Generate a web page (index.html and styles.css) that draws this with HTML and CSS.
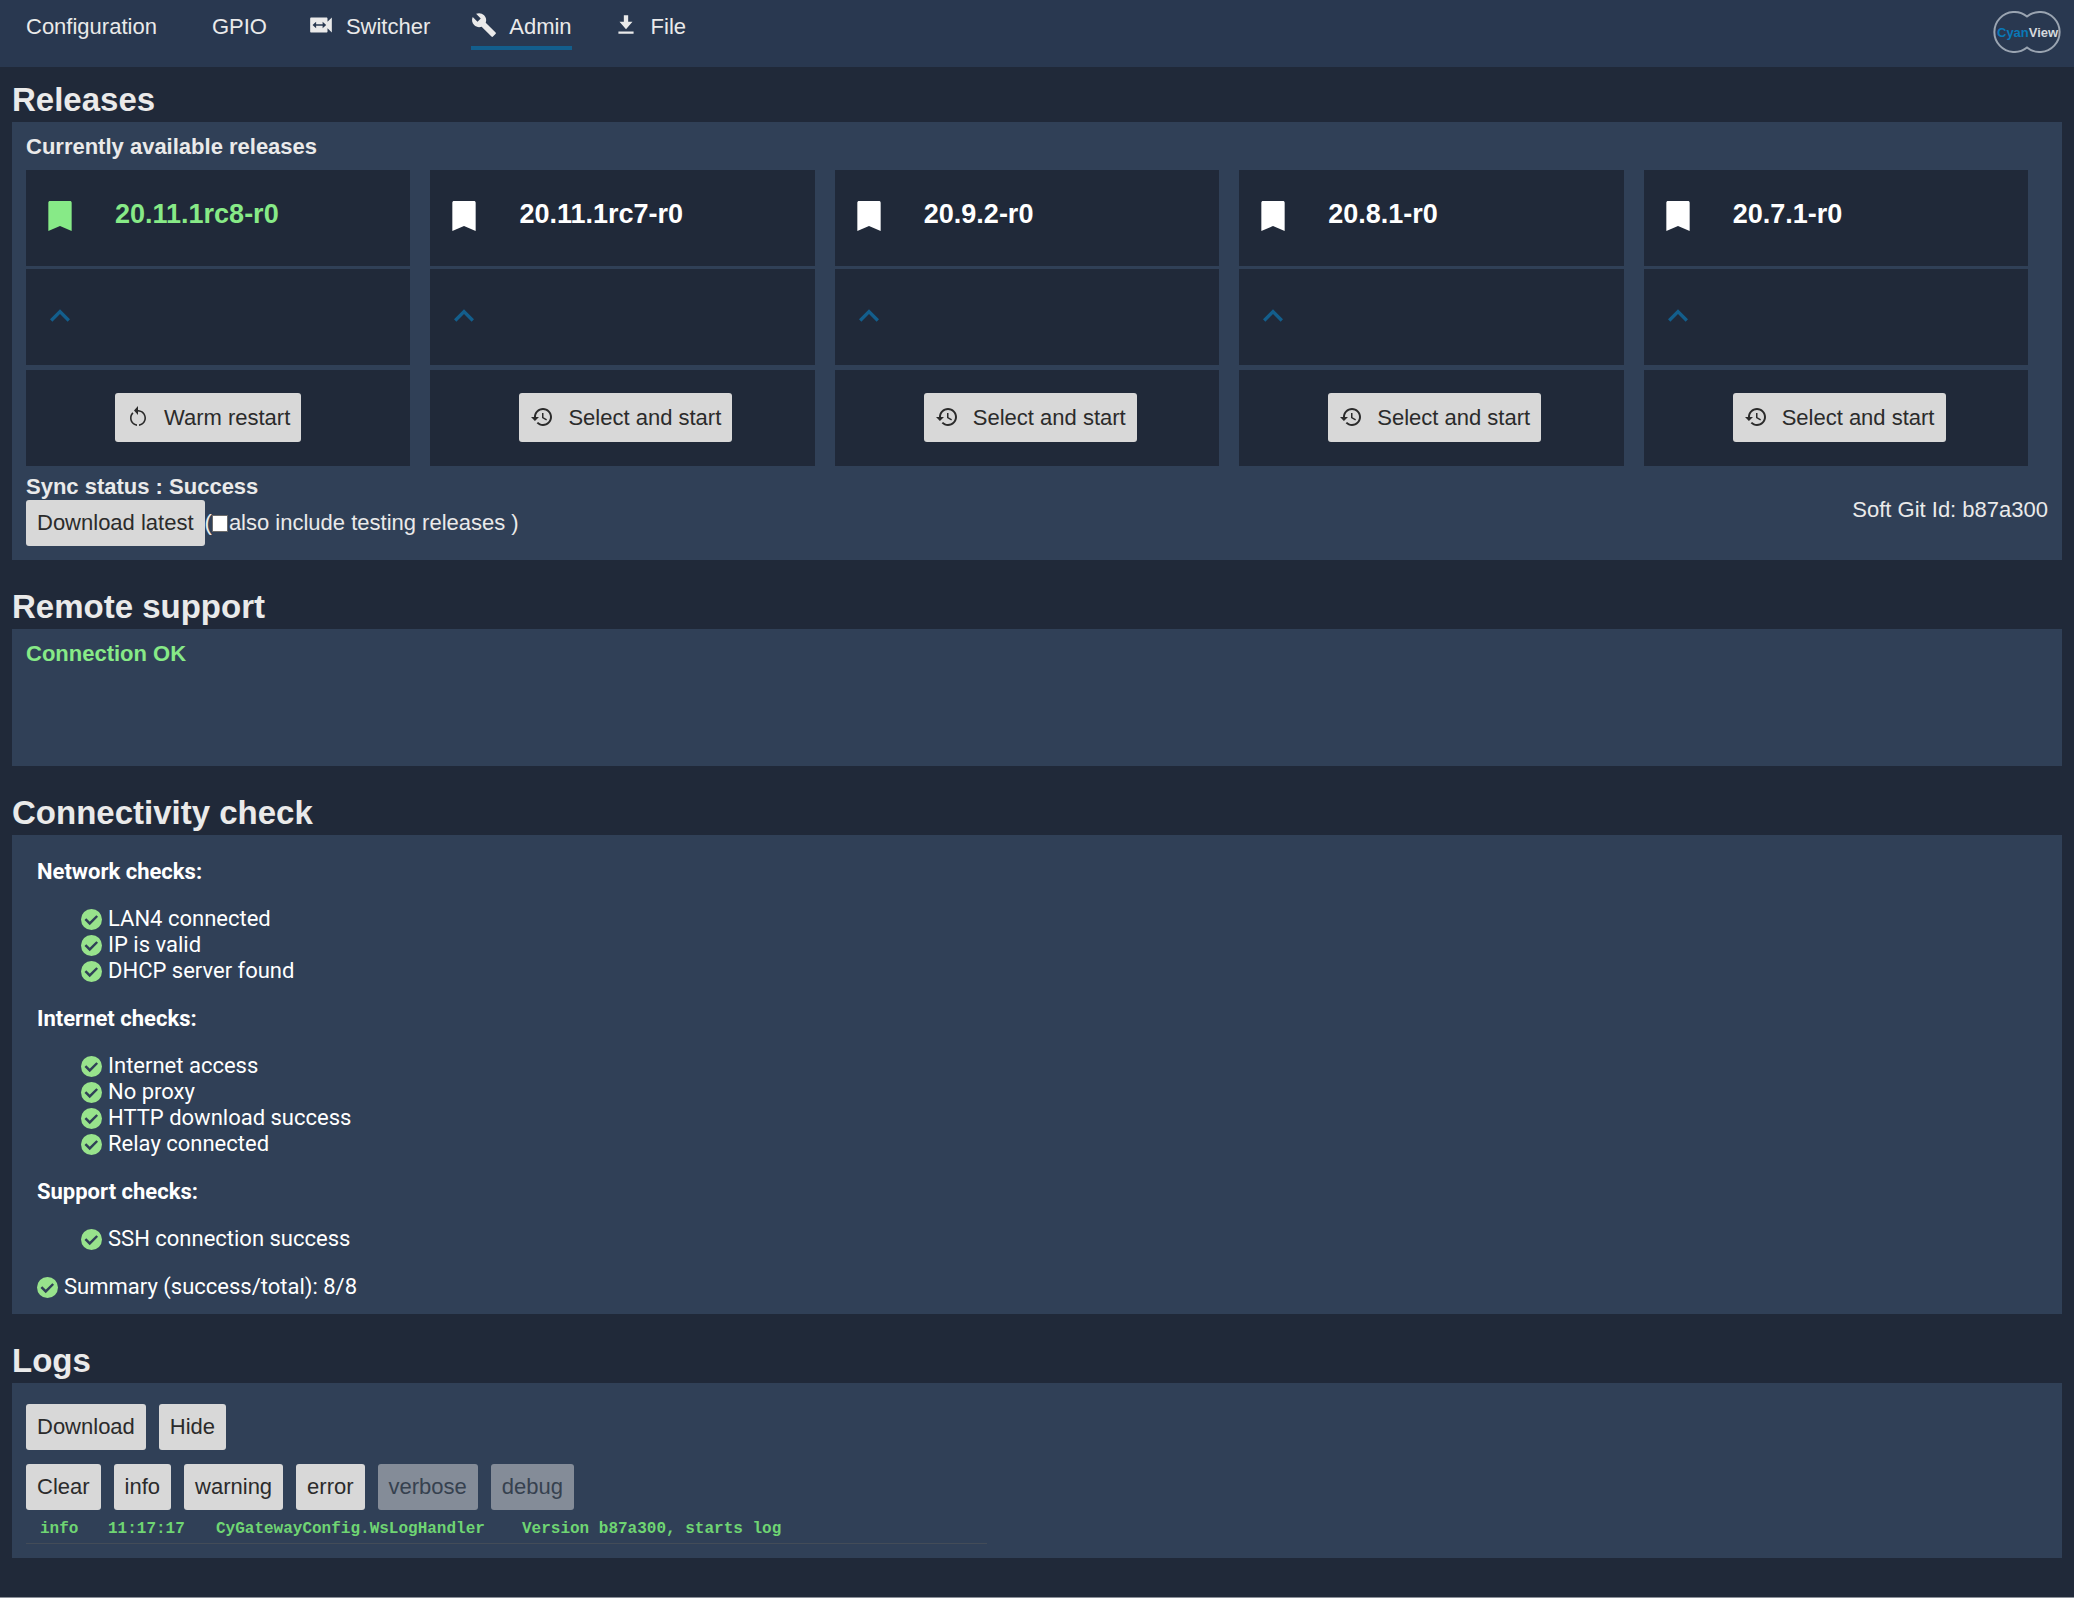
FILE: index.html
```html
<!DOCTYPE html>
<html lang="en">
<head>
<meta charset="UTF-8" />
<title>CyanView - Admin</title>
<meta name="viewport" content="width=device-width, initial-scale=1" />
<link rel="stylesheet" href="styles.css">
</head>
<body>

<!-- shared icons -->
<svg class="sprite" aria-hidden="true">
  <symbol id="i-bookmark" viewBox="0 0 24 24"><path d="M18 3H6c-.6 0-1 .4-1 1v17l7-3 7 3V4c0-.6-.4-1-1-1z"/></symbol>
  <symbol id="i-up" viewBox="0 0 24 24"><path d="M7.410 15.410L12 10.830l4.590 4.580L18 14l-6-6-6 6z"/></symbol>
  <symbol id="i-restart" viewBox="0 0 24 24"><path d="M12 5V1L8 5.500l4 4.500V6.600c3.500 0 6.400 2.900 6.400 6.400 0 3.200-2.300 5.800-5.400 6.300v1.600c3.950-.49 7-3.850 7-7.900 0-4.420-3.580-8-8-8zM5.600 13c0-1.700.7-3.300 1.900-4.500L6.340 7.340C4.900 8.790 4 10.790 4 13c0 4.080 3.050 7.440 7 7.930v-1.600c-3.100-.5-5.400-3.100-5.400-6.330z"/></symbol>
  <symbol id="i-history" viewBox="0 0 24 24"><path d="M13 3c-4.970 0-9 4.030-9 9H1l3.890 3.890.07.14L9 12H6c0-3.870 3.130-7 7-7s7 3.130 7 7-3.130 7-7 7c-1.930 0-3.680-.79-4.940-2.060l-1.420 1.420C8.270 19.990 10.510 21 13 21c4.970 0 9-4.030 9-9s-4.030-9-9-9zm-1 5v5l4.280 2.540.72-1.210-3.500-2.080V8H12z"/></symbol>
  <symbol id="i-check" viewBox="0 0 24 24"><circle cx="12" cy="12" r="12" fill="#98e38c"/><path d="M5 11.500l5 5 8.500-8.500" fill="none" stroke="#304057" stroke-width="2.800"/></symbol>
</svg>

<header class="topbar">
  <nav class="nav">
    <a class="nav-item text-only" href="#">Configuration</a>
    <a class="nav-item text-only" href="#">GPIO</a>
    <a class="nav-item" href="#">
      <svg viewBox="0 0 24 24"><path d="M18 9V6c0-.55-.45-1-1-1H3c-.55 0-1 .45-1 1v12c0 .55.45 1 1 1h14c.55 0 1-.45 1-1v-3l4 4V5l-4 4zm-4.500 6v-2.200h-6V15L4.200 12l3.300-3v2.200h6V9l3.300 3-3.300 3z"/></svg>
      Switcher
    </a>
    <a class="nav-item active" href="#">
      <svg viewBox="0 0 24 24"><path d="M22.700 19l-9.100-9.100c.9-2.300.4-5-1.500-6.900-2-2-5-2.400-7.400-1.300L9 6 6 9 1.600 4.700C.4 7.100.9 10.100 2.900 12.100c1.900 1.900 4.600 2.400 6.900 1.500l9.100 9.100c.4.4 1 .4 1.400 0l2.300-2.300c.5-.4.5-1.100.1-1.400z"/></svg>
      Admin
    </a>
    <a class="nav-item" href="#">
      <svg viewBox="0 0 24 24"><path d="M18 9h-4V3h-4v6H6l6 7 6-7zM5 18v2h14v-2H5z"/></svg>
      File
    </a>
  </nav>
  <svg class="logo" viewBox="0 0 70 42" role="img" aria-label="CyanView">
    <path d="M35 5.500A20 20 0 1 0 35 36.500A20 20 0 1 0 35 5.500Z" fill="none" stroke="#9aa4b1" stroke-width="2"/>
    <text x="5" y="26"><tspan class="logo-cyan">Cyan</tspan><tspan class="logo-view">View</tspan></text>
  </svg>
</header>

<main>
  <section>
    <h2>Releases</h2>
    <div class="panel releases">
      <h3>Currently available releases</h3>
      <div class="cards">
        <div class="card">
          <div class="row current"><svg><use href="#i-bookmark"/></svg><span>20.11.1rc8-r0</span></div>
          <div class="row expand"><svg><use href="#i-up"/></svg></div>
          <div class="row action"><button class="btn"><svg><use href="#i-restart"/></svg>Warm restart</button></div>
        </div>
        <div class="card">
          <div class="row"><svg><use href="#i-bookmark"/></svg><span>20.11.1rc7-r0</span></div>
          <div class="row expand"><svg><use href="#i-up"/></svg></div>
          <div class="row action"><button class="btn"><svg><use href="#i-history"/></svg>Select and start</button></div>
        </div>
        <div class="card">
          <div class="row"><svg><use href="#i-bookmark"/></svg><span>20.9.2-r0</span></div>
          <div class="row expand"><svg><use href="#i-up"/></svg></div>
          <div class="row action"><button class="btn"><svg><use href="#i-history"/></svg>Select and start</button></div>
        </div>
        <div class="card">
          <div class="row"><svg><use href="#i-bookmark"/></svg><span>20.8.1-r0</span></div>
          <div class="row expand"><svg><use href="#i-up"/></svg></div>
          <div class="row action"><button class="btn"><svg><use href="#i-history"/></svg>Select and start</button></div>
        </div>
        <div class="card">
          <div class="row"><svg><use href="#i-bookmark"/></svg><span>20.7.1-r0</span></div>
          <div class="row expand"><svg><use href="#i-up"/></svg></div>
          <div class="row action"><button class="btn"><svg><use href="#i-history"/></svg>Select and start</button></div>
        </div>
      </div>
      <div class="sync">
        <div>
          <h3>Sync status : Success</h3>
          <div class="sync-actions">
            <button class="btn">Download latest</button>(<input type="checkbox" id="testing"><label for="testing">also include testing releases )</label>
          </div>
        </div>
        <div>Soft Git Id: b87a300</div>
      </div>
    </div>
  </section>

  <section>
    <h2>Remote support</h2>
    <div class="panel support">
      <h3 class="ok">Connection OK</h3>
    </div>
  </section>

  <section>
    <h2>Connectivity check</h2>
    <div class="panel checks">
      <h4>Network checks:</h4>
      <ul>
        <li><svg><use href="#i-check"/></svg>LAN4 connected</li>
        <li><svg><use href="#i-check"/></svg>IP is valid</li>
        <li><svg><use href="#i-check"/></svg>DHCP server found</li>
      </ul>
      <h4>Internet checks:</h4>
      <ul>
        <li><svg><use href="#i-check"/></svg>Internet access</li>
        <li><svg><use href="#i-check"/></svg>No proxy</li>
        <li><svg><use href="#i-check"/></svg>HTTP download success</li>
        <li><svg><use href="#i-check"/></svg>Relay connected</li>
      </ul>
      <h4>Support checks:</h4>
      <ul>
        <li><svg><use href="#i-check"/></svg>SSH connection success</li>
      </ul>
      <p class="summary"><svg><use href="#i-check"/></svg>Summary (success/total): 8/8</p>
    </div>
  </section>

  <section>
    <h2>Logs</h2>
    <div class="panel logs">
      <div class="buttons">
        <button class="btn">Download</button>
        <button class="btn">Hide</button>
      </div>
      <div class="buttons">
        <button class="btn">Clear</button>
        <button class="btn">info</button>
        <button class="btn">warning</button>
        <button class="btn">error</button>
        <button class="btn off">verbose</button>
        <button class="btn off">debug</button>
      </div>
      <table class="log">
        <tr>
          <td class="level">info</td>
          <td class="time">11:17:17</td>
          <td class="source">CyGatewayConfig.WsLogHandler</td>
          <td>Version b87a300, starts log</td>
        </tr>
      </table>
    </div>
  </section>
</main>

</body>
</html>
```
FILE: styles.css
```css
* { box-sizing: border-box; }
body {
  margin: 0;
  min-height: 100vh;
  background: #202939;
  color: #eaeaea;
  font: 22px/26px "Liberation Sans", Arial, sans-serif;
  border-bottom: 1px solid #8b9099;
}
h2, h3, h4, p, ul { margin: 0; padding: 0; }
svg { fill: currentColor; flex: none; }
.sprite { display: none; }

/* top bar */
.topbar {
  display: flex; justify-content: space-between; align-items: flex-start;
  height: 67px; padding: 0 12px; background: #293850;
}
.nav { display: flex; gap: 41px; }
.nav-item {
  display: flex; align-items: center; gap: 12px;
  height: 50px; padding-top: 8px;
  color: inherit; text-decoration: none;
  border-bottom: 4px solid transparent;
}
.nav-item svg { width: 26px; height: 26px; margin-bottom: 4px; }
.text-only { padding-left: 14px; }
.active { border-color: #135e8c; }
.logo { width: 70px; height: 42px; margin-top: 11px; }
.logo text { font-size: 13px; font-weight: bold; }
.logo-cyan { fill: #0a78b8; }
.logo-view { fill: #d5d9de; }

/* sections */
main { padding: 14px 12px 39px; }
section + section { margin-top: 28px; }
h2 { font-size: 33px; line-height: 38px; margin-bottom: 3px; }
h3, h4 { font-size: 22px; line-height: 26px; }
.panel { background: #304057; padding: 12px 14px; }

.btn {
  display: inline-flex; align-items: center; gap: 14px;
  height: 46px; padding: 0 11px;
  border: none; border-radius: 3px;
  background: #d8d8d8; color: #2b2b2b;
  font: inherit; cursor: pointer;
}
.btn svg { width: 24px; height: 24px; }
.off { background: #848c98; color: #36414f; }
.ok, .current { color: #87ea87; }

/* releases */
.cards { display: flex; margin-top: 10px; }
.card { flex: 1; margin-right: 20px; }
.row {
  display: flex; align-items: center;
  height: 96px; margin-bottom: 3px; padding: 0 14px 4px;
  background: #202939; color: #fff;
}
.row svg { width: 40px; height: 40px; }
.row span { margin-left: 35px; padding-bottom: 4px; font-size: 27px; font-weight: bold; }
.row.current { color: #87ea87; }
.expand { margin-bottom: 5px; padding-bottom: 2px; color: #135e8c; }
.action { margin-bottom: 0; padding: 0 14px 2px 89px; }
.action .btn { height: 49px; padding-top: 2px; }
.action .btn svg { width: 24px; height: 24px; margin-bottom: 2px; }
.sync { display: flex; justify-content: space-between; align-items: center; margin-top: 8px; }
.sync-actions { display: flex; align-items: center; }
.sync-actions input {
  appearance: none; width: 16px; height: 17px; margin: 0 1px 0 0;
  background: #fff; border: 1px solid #6b6b6b;
}
.releases { padding-bottom: 14px; }

.support { height: 137px; }

/* connectivity check */
.checks {
  padding: 24px 25px 14px;
  color: #fff; font-family: Roboto, sans-serif;
}
.checks ul { list-style: none; margin: 21px 0 22px; padding-left: 44px; }
.checks li, .summary { display: flex; align-items: center; gap: 6px; }
.checks svg { width: 21px; height: 21px; }

/* logs */
.logs { padding: 21px 14px 14px; }
.buttons { display: flex; gap: 13px; margin-bottom: 14px; }
.log {
  width: 961px; margin-top: -6px;
  border-collapse: collapse; border-bottom: 1px solid #434c58;
  color: #6fd573; font: bold 16px/22px "Liberation Mono", monospace;
}
.log td { padding: 0 0 3px; }
.log .level { width: 82px; padding-left: 14px; }
.log .time { width: 108px; }
.log .source { width: 306px; }
```
